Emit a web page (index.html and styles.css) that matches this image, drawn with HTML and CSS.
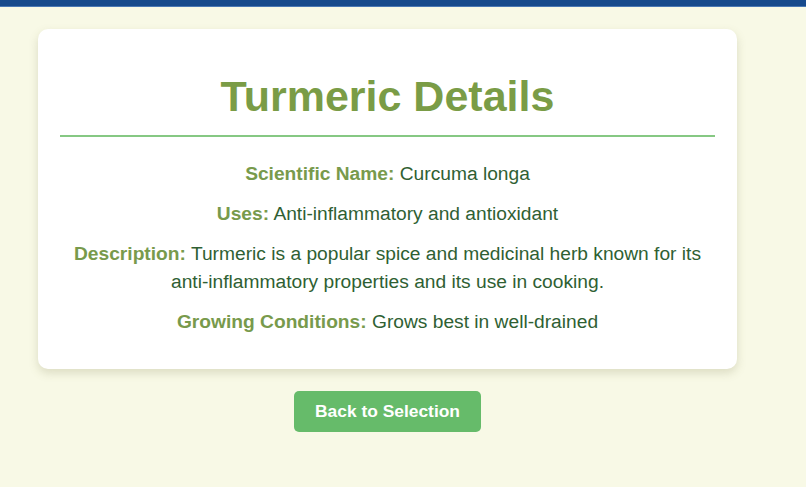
FILE: index.html
```html
<!DOCTYPE html>
<html lang="en">
<head>
<meta charset="utf-8">
<title>Turmeric Details</title>
<link rel="stylesheet" href="styles.css">
</head>
<body>
<div class="topbar"></div>
<main class="page">
  <section class="card">
    <h1 class="title">Turmeric Details</h1>
    <p class="row"><span class="label">Scientific Name:</span> Curcuma longa</p>
    <p class="row"><span class="label">Uses:</span> Anti-inflammatory and antioxidant</p>
    <p class="row"><span class="label">Description:</span> Turmeric is a popular spice and medicinal herb known for its anti-inflammatory properties and its use in cooking.</p>
    <p class="row"><span class="label">Growing Conditions:</span> Grows best in well-drained</p>
  </section>
  <div class="actions">
    <button class="back-btn" type="button">Back to Selection</button>
  </div>
</main>
</body>
</html>
```
FILE: styles.css
```css
html, body {
  margin: 0;
  padding: 0;
}
body {
  background: #f8f9e6;
  font-family: "Liberation Sans", Arial, sans-serif;
  min-height: 487px;
}
.topbar {
  height: 6px;
  background: #174a8c;
  border-bottom: 1px solid #4a78b4;
}
.page {
  width: 699px;
  margin-left: 38px;
  padding-top: 22px;
}
.card {
  background: #ffffff;
  border-radius: 10px;
  box-shadow: 0 4px 10px rgba(120, 120, 70, 0.22);
  padding: 22px 22px 21px;
  text-align: center;
}
.title {
  margin: 21px 0 23px;
  padding-bottom: 14px;
  border-bottom: 2px solid #86c883;
  font-size: 43px;
  font-weight: bold;
  color: #7a9c46;
  line-height: 49px;
}
.row {
  margin: 11px 0;
  font-size: 19.2px;
  line-height: 1.5;
  color: #2f5f33;
}
.label {
  font-weight: bold;
  color: #789a4c;
}
.actions {
  display: flex;
  justify-content: center;
  padding-top: 22px;
}
.back-btn {
  background: #66bb6a;
  color: #ffffff;
  border: none;
  border-radius: 5px;
  font-family: "Liberation Sans", Arial, sans-serif;
  font-weight: bold;
  font-size: 17.4px;
  line-height: 20px;
  padding: 10.5px 21.5px;
  cursor: pointer;
}
```
